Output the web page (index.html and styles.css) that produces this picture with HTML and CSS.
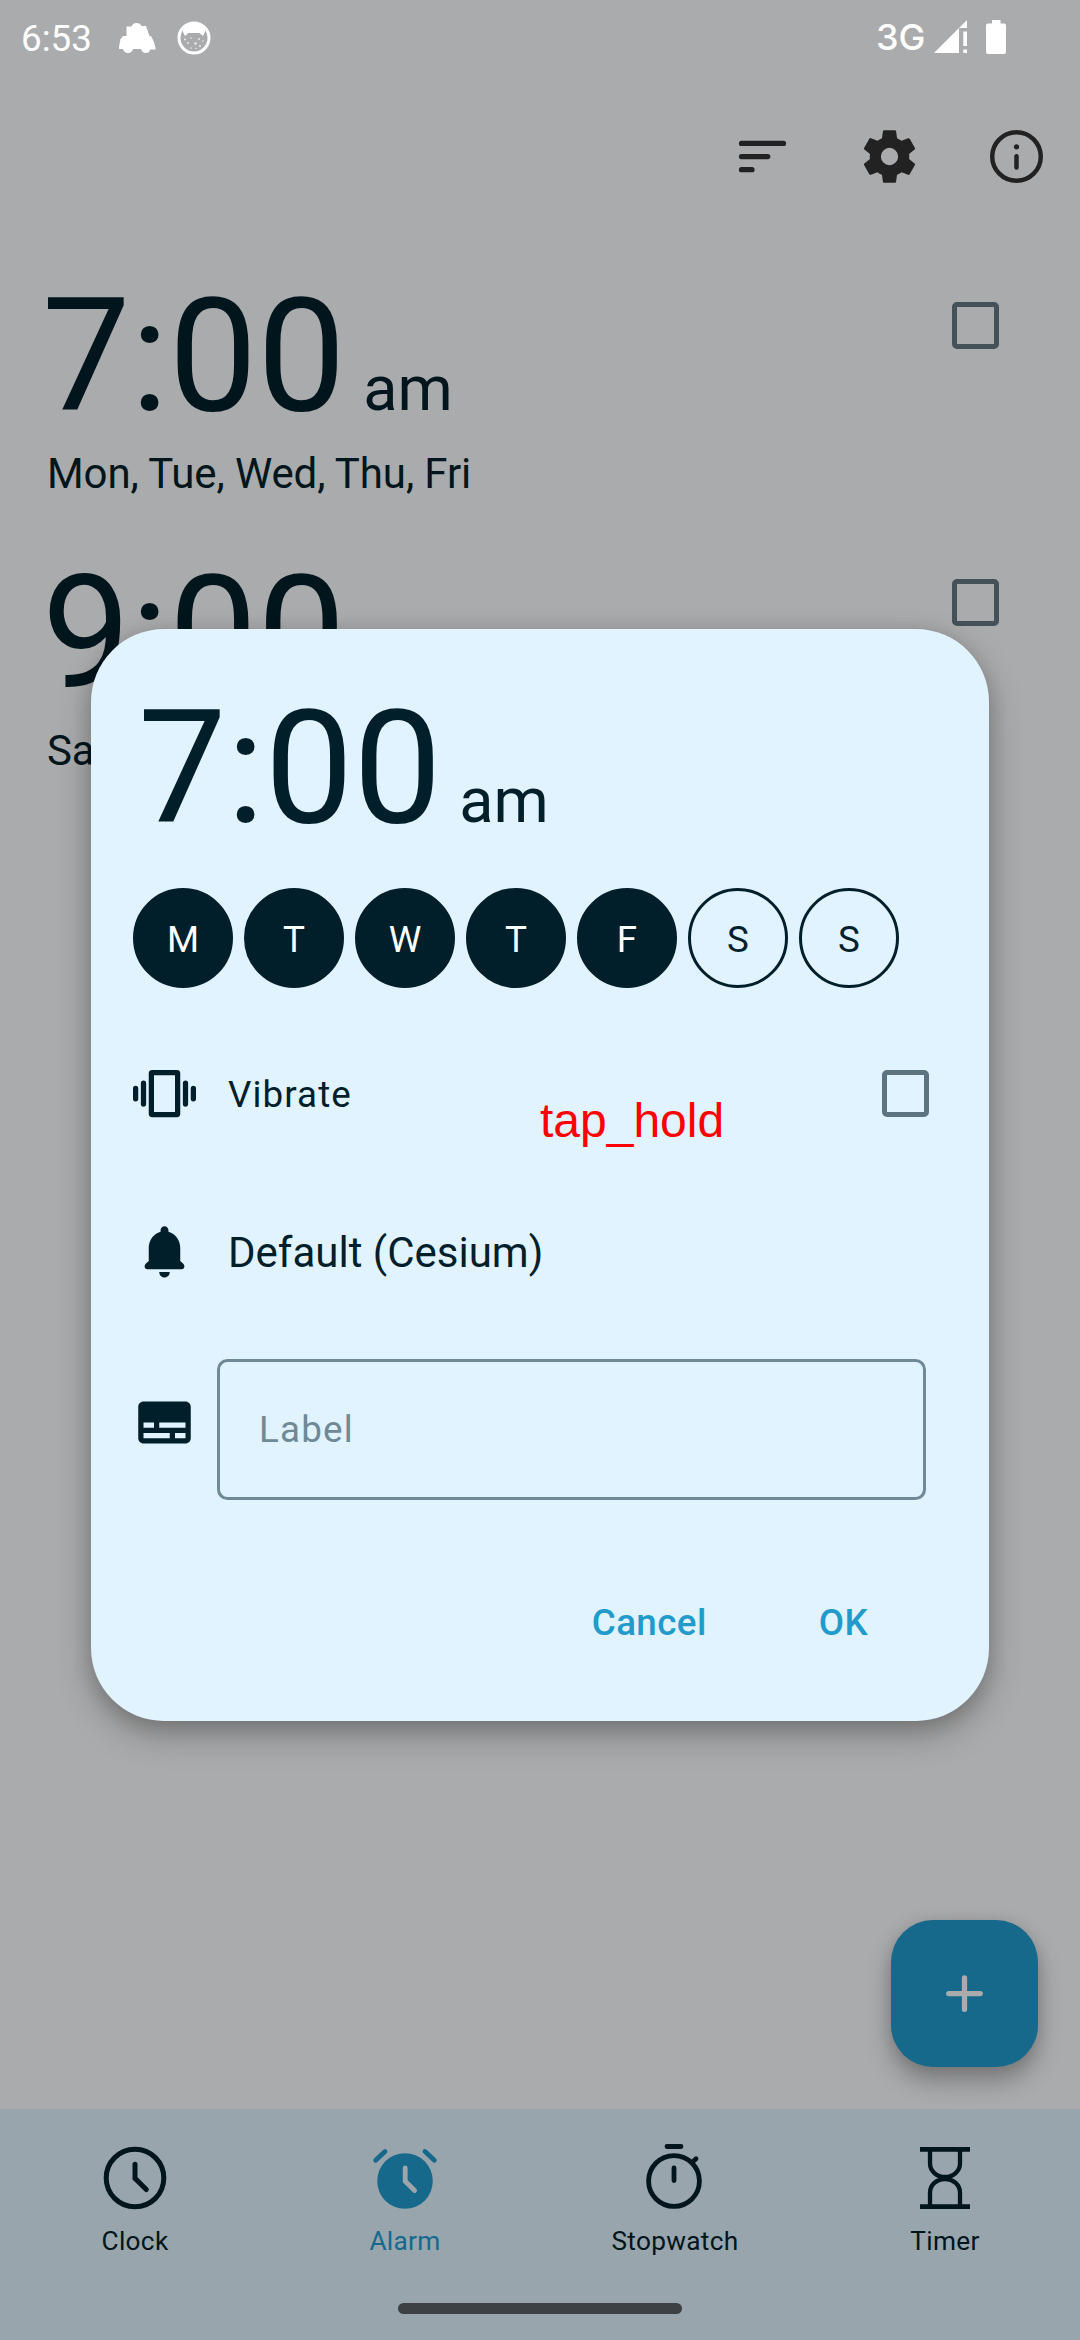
FILE: index.html
```html
<!DOCTYPE html>
<html lang="en">
<head>
<meta charset="utf-8">
<title>Clock</title>
<link rel="stylesheet" href="styles.css">
</head>
<body>
<div class="screen">
  <header class="toolbar">
    <svg class="icon" viewBox="0 0 24 24" fill="none" stroke="currentColor" stroke-width="2" stroke-linecap="round"><path d="M4 7h16M4 12h10M4 17h4"/></svg>
    <svg class="icon" viewBox="0 0 24 24" fill="currentColor"><path transform="translate(12 12) scale(1.045) translate(-12 -12)" fill-rule="evenodd" d="M19.14 12.94c.04-.3.06-.61.06-.94 0-.32-.02-.64-.07-.94l2.03-1.58c.18-.14.23-.41.12-.61l-1.92-3.32c-.12-.22-.37-.29-.59-.22l-2.39.96c-.5-.38-1.03-.7-1.62-.94l-.36-2.54c-.04-.24-.24-.41-.48-.41h-3.84c-.24 0-.43.17-.47.41l-.36 2.54c-.59.24-1.13.57-1.62.94l-2.39-.96c-.22-.08-.47 0-.59.22L2.74 8.87c-.12.21-.08.47.12.61l2.03 1.58c-.05.3-.09.63-.09.94s.02.64.07.94l-2.03 1.58c-.18.14-.23.41-.12.61l1.92 3.32c.12.22.37.29.59.22l2.39-.96c.5.38 1.03.7 1.62.94l.36 2.54c.05.24.24.41.48.41h3.84c.24 0 .44-.17.47-.41l.36-2.54c.59-.24 1.13-.56 1.62-.94l2.39.96c.22.08.47 0 .59-.22l1.92-3.32c.12-.22.07-.47-.12-.61l-2.01-1.58zM12 15.15a3.15 3.15 0 1 1 0-6.3 3.15 3.15 0 0 1 0 6.3z"/></svg>
    <svg class="icon" viewBox="0 0 24 24" fill="none" stroke="currentColor" stroke-width="1.7" stroke-linecap="round"><circle cx="12" cy="12" r="9.25"/><path d="M12 11.9v4.3"/><circle cx="12" cy="8.3" r="1" fill="currentColor" stroke="none"/></svg>
  </header>

  <main class="alarms">
    <section class="alarm">
      <div class="alarm-text">
        <div class="time">7:00<span class="period"> am</span></div>
        <div class="days">Mon, Tue, Wed, Thu, Fri</div>
      </div>
      <span class="checkbox"></span>
    </section>
    <section class="alarm">
      <div class="alarm-text">
        <div class="time">9:00<span class="period"> am</span></div>
        <div class="days">Sat, Sun</div>
      </div>
      <span class="checkbox"></span>
    </section>
  </main>

  <div class="fab"><svg viewBox="0 0 24 24" fill="none" stroke="currentColor" stroke-width="2" stroke-linecap="round"><path d="M12 6v12M6 12h12"/></svg></div>

  <nav class="tabs">
    <div class="tab">
      <svg viewBox="0 0 72 72" fill="none" stroke="currentColor" stroke-width="5" stroke-linecap="round"><circle cx="36" cy="36" r="28.8"/><path d="M36 22.3V36.4L47.3 47.5"/></svg>
      <span>Clock</span>
    </div>
    <div class="tab tab-active">
      <svg viewBox="0 0 72 72" fill="none" stroke="currentColor" stroke-width="4.8" stroke-linecap="round"><circle cx="36" cy="39" r="27.8" fill="currentColor" stroke="none"/><path d="M6.7 18.3L16 9.5M65.3 18.3L56 9.5"/><path class="hands" d="M36.2 26V39.2L45.6 48.5"/></svg>
      <span>Alarm</span>
    </div>
    <div class="tab">
      <svg viewBox="0 0 72 72" fill="none" stroke="currentColor" stroke-width="4.8" stroke-linecap="round"><circle cx="35" cy="39" r="25.4"/><path d="M28 4.5H42M35 26v12.5M53.5 20L57 16.7"/></svg>
      <span>Stopwatch</span>
    </div>
    <div class="tab">
      <svg viewBox="0 0 72 72" fill="none" stroke="currentColor" stroke-width="4.3"><path d="M11 7.4H61M11 64.6H61" stroke-width="4.8"/><path d="M21 8v13.5a15 13.5 0 0 0 30 0V8M21 64V50.5a15 13.5 0 0 1 30 0V64"/></svg>
      <span>Timer</span>
    </div>
  </nav>

  <div class="scrim">
    <div class="dialog">
      <div class="time">7:00<span class="period"> am</span></div>
      <div class="weekdays">
        <span class="day day-on">M</span><span class="day day-on">T</span><span class="day day-on">W</span><span class="day day-on">T</span><span class="day day-on">F</span><span class="day">S</span><span class="day">S</span>
      </div>
      <div class="row vibrate">
        <svg class="icon" viewBox="0 0 24 24" fill="none" stroke="currentColor" stroke-width="2" stroke-linecap="round"><rect x="7" y="4" width="10" height="16" rx=".3" stroke-linejoin="round"/><path d="M4 8v8M20 8v8M1 10v4M23 10v4"/></svg>
        <span class="row-label">Vibrate</span>
        <span class="checkbox"></span>
      </div>
      <div class="row sound">
        <svg class="icon" viewBox="0 0 24 24" fill="currentColor"><path d="M12 2.35c-.83 0-1.5.67-1.5 1.5v.65C7.8 5.2 6 7.8 6 10.7v4.9l-1.25 1.2c-.7.9-.2 1.95.75 1.95h13c.95 0 1.45-1.05.75-1.95L18 15.6v-4.9c0-2.9-1.8-5.5-4.5-6.2v-.65c0-.83-.67-1.5-1.5-1.5zM10 19.8h4c0 1.2-.9 2.1-2 2.1s-2-.9-2-2.1z"/></svg>
        <span class="row-label">Default (Cesium)</span>
      </div>
      <div class="row label-row">
        <svg class="icon" viewBox="0 0 24 24" fill="currentColor"><path fill-rule="evenodd" d="M4 4h16c1.1 0 2 .9 2 2v12c0 1.1-.9 2-2 2H4c-1.1 0-2-.9-2-2V6c0-1.1.9-2 2-2zM4 12v2h4v-2zM10 12v2h10v-2zM4 16v2h10v-2zM16 16v2h4v-2z"/></svg>
        <div class="field">Label</div>
      </div>
      <div class="actions"><span>Cancel</span><span>OK</span></div>
    </div>
  </div>

  <div class="status">
    <span class="status-time">6:53</span>
    <svg class="car" viewBox="0 0 38 32" fill="currentColor"><path d="M8.5 4.5h5C14.5 2 16 1 18.5 1s4 1 5 3h4.5l3.5 10h1.500l3 6 1.500 6v1.500h-5.500C32 30 30 31 28 31s-4-1-5-4h-8c-1 3-3 4-5 4s-4-1-5-4H1v-2l1.500-8L5 14h3.500z"/></svg>
    <svg class="cat" viewBox="0 0 34 34"><circle cx="17" cy="17" r="15" fill="none" stroke="currentColor" stroke-width="3"/><path fill="currentColor" d="M6 5.5Q17-1 28 5.5v5.500l-2 4-3.500-3h-11l-3.500 3-2-4z"/><g fill="currentColor" opacity=".75"><circle cx="8" cy="18.500" r="1"/><circle cx="14" cy="17" r=".8"/><circle cx="22" cy="18" r="1"/><circle cx="11" cy="22" r="1"/><circle cx="18.500" cy="22.500" r="1.300"/><circle cx="26" cy="20" r=".8"/><circle cx="23" cy="25" r="1"/><circle cx="14" cy="27" r=".8"/><circle cx="19" cy="27.500" r=".8"/></g></svg>
    <span class="network">3G</span>
    <svg class="signal" viewBox="0 0 33 33" fill="currentColor"><path d="M0 33L25 8v25zM25 8l8-8v8zM29.300 11.500H33V26h-3.700zM29.300 29.500H33V33h-3.700z"/></svg>
    <svg class="battery" viewBox="0 0 20 34" fill="currentColor"><path d="M6 0h8.500v3.500H18q2 0 2 2V32q0 2-2 2H2q-2 0-2-2V5.500q0-2 2-2h4z"/></svg>
  </div>
  <div class="home-bar"></div>
  <div class="gesture">tap_hold</div>
</div>
</body>
</html>
```
FILE: styles.css
```css
* { box-sizing: border-box; }

body { margin: 0; }

svg { display: block; flex: none; }

.screen {
  position: relative;
  display: flex;
  flex-direction: column;
  width: 1080px;
  height: 2340px;
  overflow: hidden;
  background: #fbfcfe;
  color: #001f2a;
  font-family: Roboto, sans-serif;
}

.icon { width: 63px; height: 63px; }

.toolbar {
  display: flex;
  justify-content: flex-end;
  gap: 64px;
  height: 264px;
  padding: 125px 32px 0 0;
  color: #333;
}

.alarms {
  display: flex;
  flex: 1;
  flex-direction: column;
  gap: 43px;
}

.alarm {
  display: flex;
  justify-content: space-between;
  height: 234px;
  padding: 0 81px 0 42px;
}

.alarm .checkbox { margin-top: 38px; border-color: #657883; }
.alarm .days { padding-left: 5px; }

.time {
  height: 185px;
  font-size: 157.5px;
  line-height: 185px;
  white-space: pre;
}

.period { margin-left: 2px; font-size: 63px; }

.days {
  font-size: 42px;
  line-height: 49px;
  letter-spacing: -.1px;
}

.checkbox {
  flex: none;
  width: 47px;
  height: 47px;
  border: 5px solid #5c7480;
  border-radius: 5px;
}

.fab {
  position: absolute;
  right: 42px;
  bottom: 273px;
  display: flex;
  align-items: center;
  justify-content: center;
  width: 147px;
  height: 147px;
  border-radius: 42px;
  background: #239bcf;
  color: #fbfcfe;
  box-shadow: 0 14px 24px rgba(0, 0, 0, .28), 0 0 16px rgba(0, 0, 0, .1);
}

.fab svg { width: 63px; height: 63px; }

.tabs {
  position: relative;
  display: flex;
  height: 231px;
  padding-top: 33px;
  background: #e1f3fe;
}

.tab {
  display: flex;
  flex: 1;
  flex-direction: column;
  align-items: center;
  gap: 12px;
  font-size: 26.25px;
  line-height: 31px;
  letter-spacing: .3px;
}

.tab svg { width: 72px; height: 72px; overflow: visible; }
.tab-active { color: #239bcf; }
.hands { stroke: #e9f5fd; }

.scrim {
  position: absolute;
  inset: 0;
  display: flex;
  align-items: flex-start;
  justify-content: center;
  padding-top: 629px;
  background: rgba(0, 0, 0, .32);
}

.dialog {
  width: 898px;
  height: 1092px;
  padding: 47px 60px 0 42px;
  border-radius: 73px;
  background: #e0f3ff;
  box-shadow: 0 14px 34px rgba(0, 0, 0, .26), 0 4px 20px rgba(0, 0, 0, .14);
}

.dialog .time { padding-left: 5px; }

.weekdays {
  display: flex;
  gap: 11px;
  margin-top: 27px;
}

.day {
  width: 100px;
  height: 100px;
  border: 3px solid #001f2a;
  border-radius: 50%;
  font-size: 36.75px;
  line-height: 97px;
  text-align: center;
}

.day-on { background: #001f2a; color: #fff; }

.row { display: flex; align-items: center; }
.row-label { flex: 1; padding: 3px 0 0 32px; }

.vibrate {
  height: 126px;
  margin-top: 42px;
  font-size: 36.75px;
  letter-spacing: 1.1px;
}

.sound {
  height: 126px;
  margin-top: 32px;
  font-size: 42px;
}

.label-row {
  gap: 21px;
  height: 141px;
  margin-top: 45px;
}

.label-row .icon { margin-top: -14px; }

.field {
  width: 709px;
  height: 141px;
  padding-left: 39px;
  border: 3px solid #6f8996;
  border-radius: 10.5px;
  color: #6f8996;
  font-size: 36.75px;
  line-height: 135px;
  letter-spacing: 1.2px;
}

.actions {
  display: flex;
  justify-content: flex-end;
  gap: 112px;
  margin-top: 101px;
  padding-right: 61px;
  color: #219bcc;
  font-size: 36.75px;
  font-weight: 500;
  line-height: 43px;
  letter-spacing: .4px;
}

.status {
  position: absolute;
  inset: 0 0 auto;
  display: flex;
  height: 76px;
  color: #fff;
}

.status-time {
  width: 118px;
  padding-left: 21px;
  font-size: 36.75px;
  line-height: 78px;
}

.car { width: 38px; height: 32px; margin-top: 22px; }
.cat { width: 34px; height: 34px; margin: 21px 0 0 21px; }

.network {
  width: 58px;
  margin-left: 665px;
  font-family: Inter, sans-serif;
  font-size: 36px;
  font-weight: 500;
  line-height: 75px;
}

.signal { width: 33px; height: 33px; margin-top: 20px; }
.battery { width: 20px; height: 34px; margin: 20px 0 0 19px; }

.home-bar {
  position: absolute;
  bottom: 26px;
  left: 398px;
  width: 284px;
  height: 11px;
  border-radius: 5.5px;
  background: #3d4143;
}

.gesture {
  position: absolute;
  top: 1093px;
  left: 540px;
  color: #f00;
  font: 48px/55px "Liberation Sans", Arial, sans-serif;
}
```
